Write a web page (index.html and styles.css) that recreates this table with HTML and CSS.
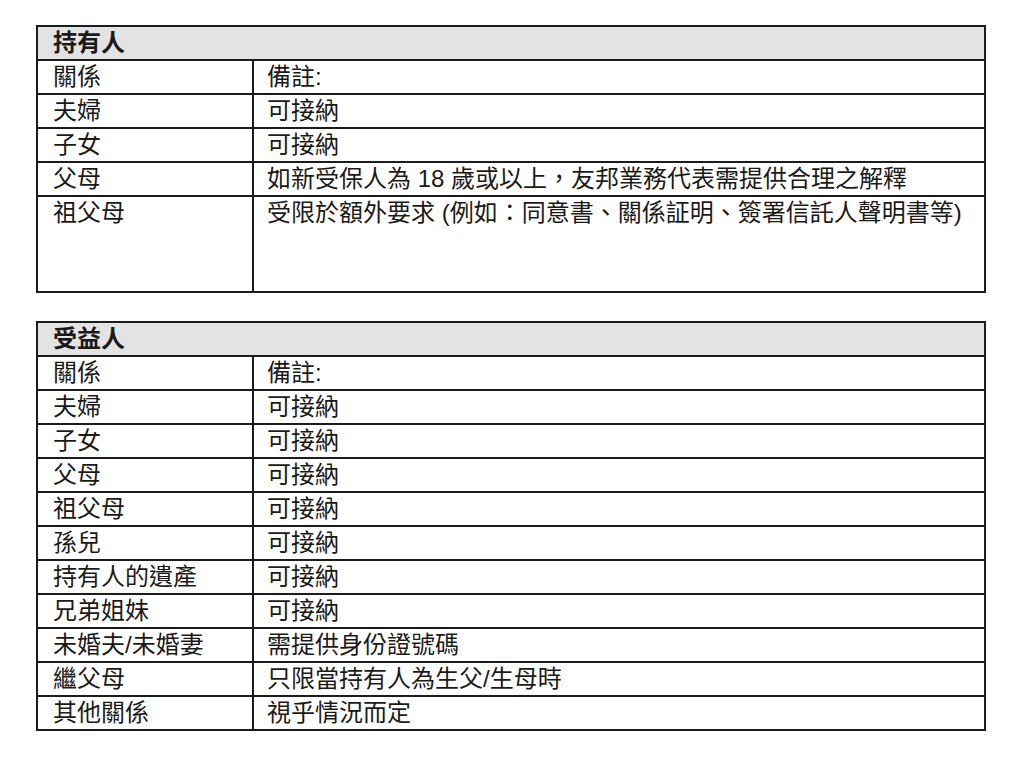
FILE: index.html
```html
<!DOCTYPE html>
<html lang="zh-Hant">
<head>
<meta charset="utf-8">
<link rel="stylesheet" href="styles.css">
</head>
<body>
<div class="page">
  <table class="grid">
    <tr class="head"><th colspan="2">持有人</th></tr>
    <tr><td class="c1">關係</td><td class="c2">備註:</td></tr>
    <tr><td class="c1">夫婦</td><td class="c2">可接納</td></tr>
    <tr><td class="c1">子女</td><td class="c2">可接納</td></tr>
    <tr><td class="c1">父母</td><td class="c2">如新受保人為 18 歲或以上，友邦業務代表需提供合理之解釋</td></tr>
    <tr class="tall"><td class="c1">祖父母</td><td class="c2">受限於額外要求 (例如：同意書、關係証明、簽署信託人聲明書等)</td></tr>
  </table>
  <table class="grid">
    <tr class="head"><th colspan="2">受益人</th></tr>
    <tr><td class="c1">關係</td><td class="c2">備註:</td></tr>
    <tr><td class="c1">夫婦</td><td class="c2">可接納</td></tr>
    <tr><td class="c1">子女</td><td class="c2">可接納</td></tr>
    <tr><td class="c1">父母</td><td class="c2">可接納</td></tr>
    <tr><td class="c1">祖父母</td><td class="c2">可接納</td></tr>
    <tr><td class="c1">孫兒</td><td class="c2">可接納</td></tr>
    <tr><td class="c1">持有人的遺產</td><td class="c2">可接納</td></tr>
    <tr><td class="c1">兄弟姐妹</td><td class="c2">可接納</td></tr>
    <tr><td class="c1">未婚夫/未婚妻</td><td class="c2">需提供身份證號碼</td></tr>
    <tr><td class="c1">繼父母</td><td class="c2">只限當持有人為生父/生母時</td></tr>
    <tr><td class="c1">其他關係</td><td class="c2">視乎情況而定</td></tr>
  </table>
</div>
</body>
</html>
```

FILE: styles.css
```css
html, body {
  margin: 0;
  padding: 0;
  background: #ffffff;
}
.page {
  padding: 25px 0 0 36px;
  display: flex;
  flex-direction: column;
  gap: 28px;
  font-family: "Liberation Sans", "Noto Sans CJK TC", sans-serif;
  color: #1a1a1a;
}
.grid {
  width: 950px;
  border-collapse: collapse;
  font-size: 24px;
}
.grid th,
.grid td {
  border: 2px solid #1c1c1c;
  height: 32px;
  padding: 0 15px;
  line-height: 32px;
  text-align: left;
  vertical-align: middle;
  white-space: nowrap;
}
.grid th {
  font-weight: bold;
  background: #e3e3e3;
}
.grid .c1 {
  width: 184px;
}
.grid .c2 {
  padding-left: 13px;
}
.grid .tall td {
  height: 94px;
  vertical-align: top;
}
```
